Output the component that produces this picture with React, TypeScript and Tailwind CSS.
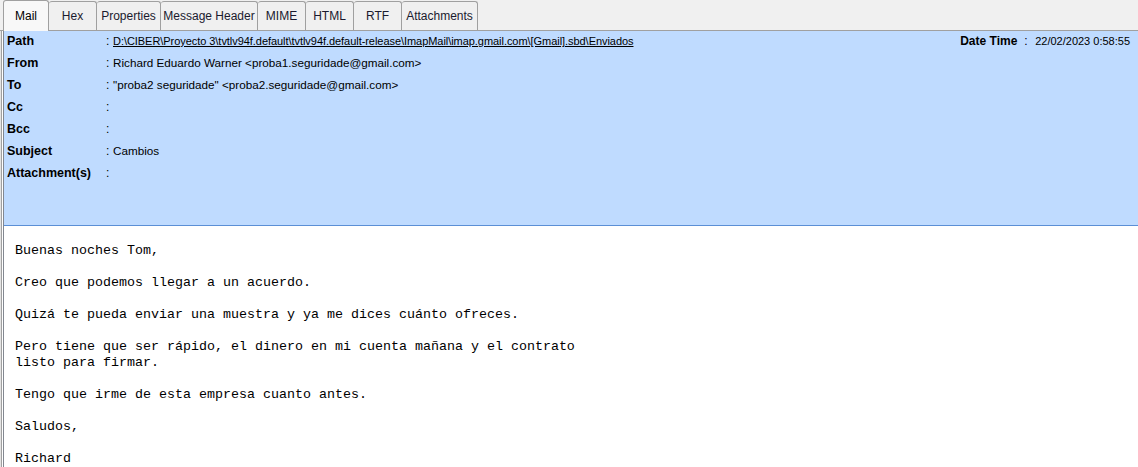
const tabs = [
  { label: "Mail", width: 46 },
  { label: "Hex", width: 48 },
  { label: "Properties", width: 64 },
  { label: "Message Header", width: 97 },
  { label: "MIME", width: 48 },
  { label: "HTML", width: 48 },
  { label: "RTF", width: 48 },
  { label: "Attachments", width: 76 },
];

const fields = [
  { label: "Path", value: "" },
  { label: "From", value: "Richard Eduardo Warner <proba1.seguridade@gmail.com>" },
  { label: "To", value: "\"proba2 seguridade\" <proba2.seguridade@gmail.com>" },
  { label: "Cc", value: "" },
  { label: "Bcc", value: "" },
  { label: "Subject", value: "Cambios" },
  { label: "Attachment(s)", value: "" },
];

const path =
  "D:\\CIBER\\Proyecto 3\\tvtlv94f.default\\tvtlv94f.default-release\\ImapMail\\imap.gmail.com\\[Gmail].sbd\\Enviados";

const body = `Buenas noches Tom,

Creo que podemos llegar a un acuerdo.

Quizá te pueda enviar una muestra y ya me dices cuánto ofreces.

Pero tiene que ser rápido, el dinero en mi cuenta mañana y el contrato
listo para firmar.

Tengo que irme de esta empresa cuanto antes.

Saludos,

Richard`;

export default function App() {
  return (
    <div className="w-[1138px] h-[467px] overflow-hidden bg-[#f0f0f0] flex flex-col font-['Liberation_Sans',sans-serif] text-[12px] text-black">
      {/* tab strip */}
      <div className="h-[31px] flex items-end pl-[3px] border-b border-[#a0a0a0] shrink-0">
        {tabs.map((tab, i) => (
          <div
            key={tab.label}
            style={{ width: tab.width }}
            className={
              i === 0
                ? "h-[31px] -mb-px flex items-center justify-center bg-[#f8f8f8] border border-b-0 border-[#a0a0a0] rounded-t-[3px] text-[12px] text-black"
                : "h-[29px] flex items-center justify-center bg-[#f0f0f0] border border-b-0 border-l-0 border-[#a0a0a0] rounded-t-[3px] text-[12px] text-[#1a1a2e]"
            }
          >
            {tab.label}
          </div>
        ))}
      </div>

      <div className="flex-1 flex min-h-0">
        <div className="w-[3px] shrink-0 flex">
          <div className="w-px bg-[#e3e3e3]" />
          <div className="w-px bg-[#a0a0a0]" />
          <div className="w-px bg-[#ffffff]" />
        </div>
        <div className="flex-1 flex flex-col border-l border-[#828790] bg-white min-w-0">
          {/* header */}
          <div className="h-[195px] shrink-0 bg-[#bfdbff] border-b border-[#5b8fd6] pt-[2px] pl-[3px]">
            {fields.map((f) => (
              <div key={f.label} className="h-[22px] flex items-start leading-[16px]">
                <span className="w-[99px] shrink-0 font-bold text-[12.5px]">{f.label}</span>
                <span className="w-[7px] shrink-0">:</span>
                {f.label === "Path" ? (
                  <>
                    <span className="underline text-[11px] tracking-[-0.05px] whitespace-nowrap">{path}</span>
                    <span className="ml-auto flex pr-[8px] whitespace-nowrap">
                      <span className="font-bold w-[64px]">Date Time</span>
                      <span className="w-[11px]">:</span>
                      <span className="text-[11px]">22/02/2023 0:58:55</span>
                    </span>
                  </>
                ) : (
                  <span className="text-[11.7px] whitespace-nowrap">{f.value}</span>
                )}
              </div>
            ))}
          </div>

          {/* body */}
          <div className="flex-1 pt-[17px] pl-[11px] font-['Liberation_Mono',monospace] text-[13.33px] leading-[16px] whitespace-pre text-black">
            {body}
          </div>
        </div>
      </div>
    </div>
  );
}
